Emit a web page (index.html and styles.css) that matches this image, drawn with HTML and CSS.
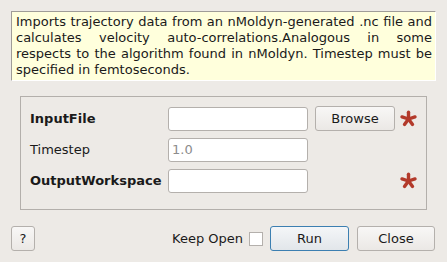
FILE: index.html
```html
<!DOCTYPE html>
<html lang="en">
<head>
  <meta charset="UTF-8" />
  <title>LoadNMoldyn3Ascii</title>
  <link rel="stylesheet" href="styles.css">
</head>
<body>
  <div class="dialog">
    <div class="desc">
      <p>Imports trajectory data from an nMoldyn-generated .nc file and calculates velocity auto-correlations.Analogous in some respects to the algorithm found in nMoldyn. Timestep must be specified in femtoseconds.</p>
    </div>

    <div class="group">
      <div class="props">
        <label class="props__label props__label--req">InputFile</label>
        <input class="props__input" type="text">
        <button class="btn btn--browse">Browse</button>
        <span class="star">
          <svg width="17" height="17" viewBox="0 0 17 17"><g stroke="#b33a2b" stroke-width="3.4" stroke-linecap="round"><line x1="8.5" y1="9" x2="8.5" y2="2.2"/><line x1="8.5" y1="9" x2="15" y2="6.9"/><line x1="8.5" y1="9" x2="12.5" y2="14.5"/><line x1="8.5" y1="9" x2="4.5" y2="14.5"/><line x1="8.5" y1="9" x2="2" y2="6.9"/></g></svg>
        </span>

        <label class="props__label">Timestep</label>
        <input class="props__input" type="text" placeholder="1.0">
        <span></span>
        <span></span>

        <label class="props__label props__label--req">OutputWorkspace</label>
        <input class="props__input" type="text">
        <span></span>
        <span class="star">
          <svg width="17" height="17" viewBox="0 0 17 17"><g stroke="#b33a2b" stroke-width="3.4" stroke-linecap="round"><line x1="8.5" y1="9" x2="8.5" y2="2.2"/><line x1="8.5" y1="9" x2="15" y2="6.9"/><line x1="8.5" y1="9" x2="12.5" y2="14.5"/><line x1="8.5" y1="9" x2="4.5" y2="14.5"/><line x1="8.5" y1="9" x2="2" y2="6.9"/></g></svg>
        </span>
      </div>
    </div>

    <div class="bottom">
      <button class="btn btn--help">?</button>
      <div class="bottom__right">
        <label class="keep">Keep Open <span class="keep__box"></span></label>
        <button class="btn btn--run">Run</button>
        <button class="btn btn--close">Close</button>
      </div>
    </div>
  </div>
</body>
</html>
```

FILE: styles.css
```css
html, body {
  height: 100%;
}

body {
  margin: 0;
  background-color: #edeae6;
  font-family: 'DejaVu Sans', sans-serif;
  font-size: 13px;
  color: #1a1a1a;
}

.dialog {
  display: flex;
  flex-direction: column;
  padding: 11px 11px 0 11px;
}

.desc {
  height: 70px;
  box-sizing: border-box;
  background: #ffffdc;
  border-left: 1px solid #9f9c98;
  border-top: 1px solid #9f9c98;
  border-right: 1px solid #fff;
  border-bottom: 1px solid #fff;
  padding: 2px 3px 0 4px;
}

.desc p {
  margin: 0;
  line-height: 16px;
  text-align: justify;
}

.group {
  margin: 15px 9px 0 9px;
  height: 114px;
  box-sizing: border-box;
  border: 1px solid #b3afab;
  padding: 9px 0 0 9px;
}

.props {
  display: grid;
  grid-template-columns: 131px 140px 80px 22px;
  grid-auto-rows: 25px;
  column-gap: 7px;
  row-gap: 6px;
  align-items: center;
}

.props__label {
  white-space: nowrap;
}

.props__label--req {
  font-weight: bold;
}

.props__input {
  height: 24px;
  box-sizing: border-box;
  margin: 0;
  border: 1px solid #b4b0ac;
  border-radius: 3px;
  background: #fff;
  font-family: inherit;
  font-size: 13px;
  padding: 0 3px;
}

.props__input::placeholder {
  color: #8c8c8c;
}

.star {
  display: flex;
  align-items: center;
  margin-left: -2px;
}

.btn {
  height: 25px;
  box-sizing: border-box;
  margin: 0;
  padding: 0;
  border: 1px solid #b4b0ac;
  border-radius: 3px;
  background: linear-gradient(#f8f7f6, #ebe8e5);
  font-family: inherit;
  font-size: 13px;
  color: #1a1a1a;
}

.btn--browse {
  width: 80px;
}

.bottom {
  display: flex;
  justify-content: space-between;
  align-items: center;
  margin-top: 16px;
  padding-right: 1px;
}

.btn--help {
  width: 24px;
}

.bottom__right {
  display: flex;
  align-items: center;
}

.keep {
  display: flex;
  align-items: center;
  gap: 6px;
  margin-right: 7px;
}

.keep__box {
  width: 12px;
  height: 12px;
  border: 1px solid #b4b0ac;
  background: #fff;
}

.btn--run {
  width: 79px;
  border-color: #3c7fb1;
  background: linear-gradient(#f4f6f8, #e2e6ea);
  margin-right: 8px;
}

.btn--close {
  width: 78px;
}
```
